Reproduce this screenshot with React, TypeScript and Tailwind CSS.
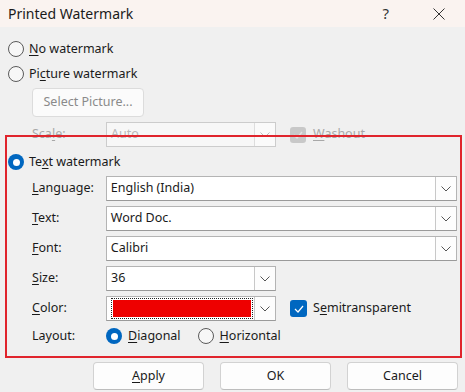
import React from "react";

const Chevron = ({ color = "#555" }: { color?: string }) => (
  <svg width="10" height="6" viewBox="0 0 10 6" fill="none">
    <path d="M0.5 0.5 L5 5 L9.5 0.5" stroke={color} strokeWidth="1" />
  </svg>
);

const Radio = ({ checked }: { checked?: boolean }) =>
  checked ? (
    <span className="flex h-[16px] w-[16px] items-center justify-center rounded-full bg-[#0067c0]">
      <span className="h-[7px] w-[7px] rounded-full bg-white" />
    </span>
  ) : (
    <span className="h-[16px] w-[16px] rounded-full border border-[#5a5a5a] bg-[#f7f7f7]" />
  );

const U = ({ children }: { children: React.ReactNode }) => <span className="underline underline-offset-[2px]">{children}</span>;

const Combo = ({ value, width, disabled }: { value: React.ReactNode; width: string; disabled?: boolean }) => (
  <div
    className={`flex h-[25px] ${width} border ${disabled ? "border-[#cccccc] bg-[#f7f7f7] text-[#b8b8b8]" : "border-[#b4b4b4] border-b-[#9a9a9a] bg-white text-[#1a1a1a]"}`}
  >
    <div className="flex flex-1 items-center pl-[4px]">{value}</div>
    <div className={`flex w-[21px] items-center justify-center border-l ${disabled ? "border-[#dddddd] bg-[#fafafa]" : "border-[#c8c8c8] bg-[#fdfdfd]"}`}>
      <Chevron color={disabled ? "#bbb" : "#555"} />
    </div>
  </div>
);

const Label = ({ children, dim }: { children: React.ReactNode; dim?: boolean }) => (
  <div className={`w-[74px] ${dim ? "text-[#a8a8a8]" : "text-[#1a1a1a]"}`}>{children}</div>
);

const Btn = ({ children }: { children: React.ReactNode }) => (
  <button className="flex h-[28px] w-[111px] items-center justify-center rounded-[4px] border border-[#d2d2d2] border-b-[#bdbdbd] bg-[#fdfdfd] text-[#1a1a1a]">
    {children}
  </button>
);

export default function App() {
  return (
    <div
      className="relative h-[392px] w-[465px] overflow-hidden bg-[#f0f0f0] text-[12.5px] text-[#1a1a1a]"
      style={{ fontFamily: '"Noto Sans", "Open Sans", sans-serif' }}
    >
      <div className="flex h-[27px] items-center bg-[#faf3f0] pl-[8px]">
        <span className="flex-1 text-[14px] text-[#1a1a1a]">Printed Watermark</span>
        <span className="mr-[44px] text-[15px] text-[#333]">?</span>
        <svg width="12" height="12" viewBox="0 0 12 12" className="mr-[20px]">
          <path d="M0.5 0.5 L11.5 11.5 M11.5 0.5 L0.5 11.5" stroke="#333" strokeWidth="1" />
        </svg>
      </div>

      <div className="flex flex-col px-[8px]">
        <div className="mt-[10px] flex h-[24px] items-center gap-[5px]">
          <Radio />
          <span>
            <U>N</U>o watermark
          </span>
        </div>
        <div className="flex h-[26px] items-center gap-[5px]">
          <Radio />
          <span>
            Pi<U>c</U>ture watermark
          </span>
        </div>
        <div className="mt-[1px] pl-[24px]">
          <div className="flex h-[29px] w-[112px] items-center justify-center rounded-[4px] border border-[#dcdcdc] bg-[#fbfbfb] text-[#8a8a8a]">
            Select Picture...
          </div>
        </div>
        <div className="mt-[5px] flex h-[25px] items-center pl-[24px]">
          <Label dim>
            Sca<U>l</U>e:
          </Label>
          <Combo value="Auto" width="w-[170px]" disabled />
          <div className="ml-[14px] flex items-center gap-[7px] text-[#a8a8a8]">
            <span className="flex h-[16px] w-[16px] items-center justify-center rounded-[3px] bg-[#c8c8c8]">
              <svg width="10" height="8" viewBox="0 0 10 8" fill="none">
                <path d="M1 4 L4 7 L9 1" stroke="#e4e4e4" strokeWidth="1.3" />
              </svg>
            </span>
            <span>
              <U>W</U>ashout
            </span>
          </div>
        </div>
        <div className="mt-[3px] flex h-[24px] items-center gap-[5px]">
          <Radio checked />
          <span>
            Te<U>x</U>t watermark
          </span>
        </div>
        <div className="mt-[2px] flex h-[25px] items-center pl-[24px]">
          <Label>
            <U>L</U>anguage:
          </Label>
          <Combo value="English (India)" width="w-[352px]" />
        </div>
        <div className="mt-[5px] flex h-[25px] items-center pl-[24px]">
          <Label>
            <U>T</U>ext:
          </Label>
          <Combo value="Word Doc." width="w-[352px]" />
        </div>
        <div className="mt-[5px] flex h-[25px] items-center pl-[24px]">
          <Label>
            <U>F</U>ont:
          </Label>
          <Combo value="Calibri" width="w-[352px]" />
        </div>
        <div className="mt-[5px] flex h-[25px] items-center pl-[24px]">
          <Label>
            <U>S</U>ize:
          </Label>
          <Combo value="36" width="w-[170px]" />
        </div>
        <div className="mt-[5px] flex h-[25px] items-center pl-[24px]">
          <Label>
            <U>C</U>olor:
          </Label>
          <Combo
            value={
              <div className="mr-[1px] flex h-[21px] w-full items-center border border-dotted border-[#222] p-[1px]">
                <div className="h-full w-full bg-[#ee0000]" />
              </div>
            }
            width="w-[170px]"
          />
          <div className="ml-[14px] flex items-center gap-[6px]">
            <span className="flex h-[17px] w-[17px] items-center justify-center rounded-[3px] bg-[#0067c0]">
              <svg width="10" height="8" viewBox="0 0 10 8" fill="none">
                <path d="M1 4 L4 7 L9 1" stroke="#fff" strokeWidth="1.2" />
              </svg>
            </span>
            <span>
              S<U>e</U>mitransparent
            </span>
          </div>
        </div>
        <div className="mt-[3px] flex h-[24px] items-center pl-[24px]">
          <Label>Layout:</Label>
          <div className="flex items-center gap-[6px]">
            <Radio checked />
            <span>
              <U>D</U>iagonal
            </span>
          </div>
          <div className="ml-[17px] flex items-center gap-[6px]">
            <Radio />
            <span>
              <U>H</U>orizontal
            </span>
          </div>
        </div>
        <div className="mr-[-1px] mt-[14px] flex justify-end gap-[16px]">
          <Btn>
            <U>A</U>pply
          </Btn>
          <Btn>OK</Btn>
          <Btn>Cancel</Btn>
        </div>
      </div>

      <div className="pointer-events-none absolute left-[5px] top-[135px] h-[223px] w-[457px] border-2 border-[#e0242c]" />
    </div>
  );
}
